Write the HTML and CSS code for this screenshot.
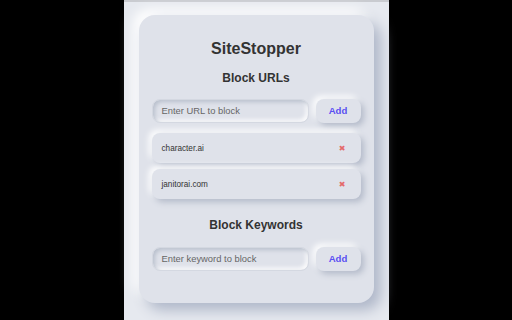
FILE: index.html
```html
<!DOCTYPE html>
<html>
<head>
<meta charset="utf-8">
<link rel="stylesheet" href="styles.css">
</head>
<body>
<div class="panel">
  <div class="card">
    <h1 class="title">SiteStopper</h1>
    <h2 class="heading">Block URLs</h2>
    <div class="row">
      <div class="input">Enter URL to block</div>
      <div class="btn">Add</div>
    </div>
    <div class="list">
      <div class="item"><span class="name">character.ai</span><span class="del">&#x2716;</span></div>
      <div class="item"><span class="name">janitorai.com</span><span class="del">&#x2716;</span></div>
    </div>
    <h2 class="heading heading-kw">Block Keywords</h2>
    <div class="row row-kw">
      <div class="input">Enter keyword to block</div>
      <div class="btn">Add</div>
    </div>
  </div>
</div>
</body>
</html>
```
FILE: styles.css
```css
html, body {
  margin: 0;
  padding: 0;
  background: #000;
  font-family: "Liberation Sans", Arial, sans-serif;
}
body {
  display: flex;
  justify-content: center;
  height: 320px;
  overflow: hidden;
}
.panel {
  width: 265px;
  height: 320px;
  box-sizing: border-box;
  background: #e6e9ef;
  border-top: 2px solid #c9cbd0;
  padding: 13px 15px 0 15px;
}
.card {
  width: 235px;
  height: 288px;
  box-sizing: border-box;
  background: #dfe2ea;
  border-radius: 16px;
  box-shadow: 7px 7px 14px #aeb6c8, -6px -6px 12px #ffffff;
  padding: 24px 13px 0 13px;
  display: flex;
  flex-direction: column;
}
.title {
  margin: 0;
  font-size: 16px;
  line-height: 20px;
  font-weight: bold;
  color: #333;
  text-align: center;
}
.heading {
  margin: 11px 0 0 0;
  font-size: 12px;
  line-height: 16px;
  font-weight: bold;
  color: #333;
  text-align: center;
}
.heading-kw {
  margin-top: 18px;
}
.row {
  display: flex;
  gap: 7px;
  margin-top: 13px;
  height: 24px;
}
.row-kw {
  margin-top: 14px;
}
.input {
  flex: 1;
  box-sizing: border-box;
  border-radius: 8px;
  background: #dfe2ea;
  box-shadow: inset 2px 2px 4px #b8bfcc, inset -2px -2px 4px #ffffff;
  border: 1px solid #d4d8e1;
  padding-left: 9px;
  font-size: 9.4px;
  line-height: 22px;
  color: #666;
}
.btn {
  width: 45px;
  box-sizing: border-box;
  border-radius: 8px;
  background: #dfe2ea;
  box-shadow: 3px 3px 6px #b3bac9, -3px -3px 6px #ffffff;
  font-size: 9.6px;
  font-weight: bold;
  color: #5a4ff2;
  text-align: center;
  line-height: 24px;
}
.list {
  display: flex;
  flex-direction: column;
  gap: 6px;
  margin-top: 10px;
}
.item {
  height: 30px;
  box-sizing: border-box;
  border-radius: 8px;
  background: #dfe2ea;
  box-shadow: 3px 3px 6px #b3bac9, -3px -3px 6px #ffffff;
  display: flex;
  align-items: center;
  justify-content: space-between;
  padding: 0 15px 0 10px;
}
.name {
  font-size: 8.2px;
  color: #333;
}
.del {
  font-size: 8px;
  color: #e46a6a;
  font-family: "DejaVu Sans", sans-serif;
}
```
